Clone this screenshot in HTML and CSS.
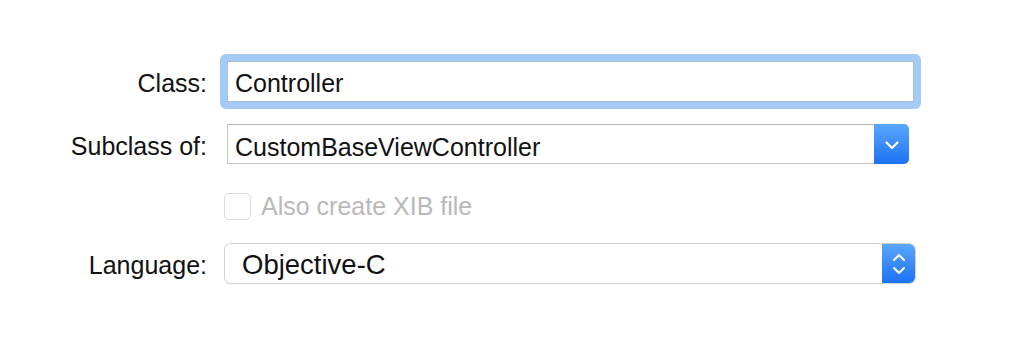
FILE: index.html
```html
<!DOCTYPE html>
<html>
<head>
<meta charset="utf-8">
<link rel="stylesheet" href="styles.css">
</head>
<body>
<div class="form">
  <div class="row row-class">
    <div class="label">Class:</div>
    <div class="focus-ring">
      <div class="field">Controller</div>
    </div>
  </div>
  <div class="row row-sub">
    <div class="label">Subclass of:</div>
    <div class="combo">
      <div class="combo-text">CustomBaseViewController</div>
      <div class="combo-btn">
        <svg width="14" height="9" viewBox="0 0 14 9"><path d="M1.5 1.5 L7 7 L12.5 1.5" fill="none" stroke="#fff" stroke-width="2.2" stroke-linecap="round" stroke-linejoin="round"/></svg>
      </div>
    </div>
  </div>
  <div class="row row-check">
    <div class="label"></div>
    <div class="check"></div>
    <div class="check-text">Also create XIB file</div>
  </div>
  <div class="row row-lang">
    <div class="label">Language:</div>
    <div class="popup">
      <div class="popup-text">Objective-C</div>
      <div class="popup-btn">
        <svg width="14" height="26" viewBox="0 0 14 26"><path d="M2 9 L7 4 L12 9" fill="none" stroke="#fff" stroke-width="2" stroke-linecap="round" stroke-linejoin="round"/><path d="M2 17 L7 22 L12 17" fill="none" stroke="#fff" stroke-width="2" stroke-linecap="round" stroke-linejoin="round"/></svg>
      </div>
    </div>
  </div>
</div>
</body>
</html>
```
FILE: styles.css
```css
html, body {
  margin: 0;
  padding: 0;
  background: #ffffff;
}
body {
  width: 1028px;
  height: 362px;
  overflow: hidden;
  font-family: "Liberation Sans", Arial, sans-serif;
  font-size: 25px;
  color: #111111;
}
.form {
  display: flex;
  flex-direction: column;
  padding-top: 54px;
}
.row {
  display: flex;
  align-items: center;
}
.label {
  width: 207px;
  text-align: right;
  flex: none;
  color: #111111;
  padding-top: 4px;
}
.row-class { height: 55px; }
.row-sub { height: 40px; margin-top: 15px; }
.row-check { height: 28px; margin-top: 28px; }
.row-lang { height: 39px; margin-top: 24px; }

.focus-ring {
  margin-left: 13px;
  width: 701px;
  height: 55px;
  box-sizing: border-box;
  padding: 7px;
  background: #a3cbf6;
  border-radius: 6px;
}
.field {
  height: 41px;
  box-sizing: border-box;
  background: #fff;
  border: 1px solid #a9bdd6;
  padding-left: 7px;
  display: flex;
  align-items: center;
  padding-top: 4px;
}

.combo {
  margin-left: 20px;
  width: 682px;
  height: 40px;
  display: flex;
}
.combo-text {
  flex: 1;
  box-sizing: border-box;
  border: 1px solid #c6c6c6;
  border-top-color: #b4b4b4;
  border-right: none;
  background: #fff;
  padding-left: 7px;
  display: flex;
  align-items: center;
  padding-top: 6px;
}
.combo-btn {
  width: 35px;
  flex: none;
  border-radius: 0 5px 5px 0;
  background: linear-gradient(#5aa6fd, #1c72f2);
  display: flex;
  align-items: center;
  justify-content: center;
  padding-top: 2px;
}

.check {
  margin-left: 17px;
  width: 27px;
  height: 27px;
  box-sizing: border-box;
  border: 1px solid #dcdcdc;
  border-radius: 5px;
  background: #fff;
}
.check-text {
  margin-left: 10px;
  color: #b9b9b9;
}

.popup {
  margin-left: 18px;
  width: 690px;
  height: 39px;
  display: flex;
  box-sizing: border-box;
  border-radius: 6px;
  box-shadow: 0 0 0 1px #d2d2d2, 0 1px 1px rgba(0,0,0,0.15);
  overflow: hidden;
}
.popup-text {
  flex: 1;
  background: #fff;
  padding-left: 17px;
  display: flex;
  align-items: center;
  font-size: 27.5px;
  color: #111111;
  padding-top: 2px;
}
.popup-btn {
  width: 33px;
  flex: none;
  background: linear-gradient(#5aa6fd, #1c72f2);
  display: flex;
  align-items: center;
  justify-content: center;
}
```
